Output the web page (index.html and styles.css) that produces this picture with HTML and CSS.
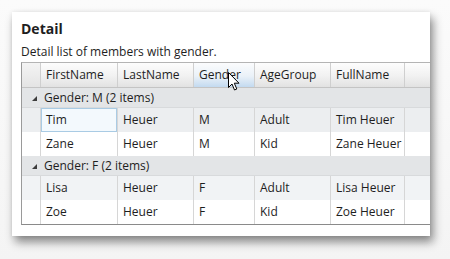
FILE: index.html
```html
<!DOCTYPE html>
<html lang="en">
<head>
    <meta charset="UTF-8">
    <title>Detail</title>
    <link rel="stylesheet" href="styles.css">
</head>
<body>
    <div class="window">
        <h1>Detail</h1>
        <p class="subtitle">Detail list of members with gender.</p>

        <div class="grid">
            <div class="row header">
                <div class="cell rowhead"></div>
                <div class="cell">FirstName</div>
                <div class="cell">LastName</div>
                <div class="cell hover">Gender</div>
                <div class="cell">AgeGroup</div>
                <div class="cell">FullName</div>
                <div class="cell filler"></div>
            </div>

            <div class="group"><span class="toggle"></span>Gender: M (2 items)</div>
            <div class="row selected">
                <div class="cell rowhead"></div>
                <div class="cell focus">Tim</div>
                <div class="cell">Heuer</div>
                <div class="cell">M</div>
                <div class="cell">Adult</div>
                <div class="cell">Tim Heuer</div>
                <div class="cell filler"></div>
            </div>
            <div class="row">
                <div class="cell rowhead"></div>
                <div class="cell">Zane</div>
                <div class="cell">Heuer</div>
                <div class="cell">M</div>
                <div class="cell">Kid</div>
                <div class="cell">Zane Heuer</div>
                <div class="cell filler"></div>
            </div>

            <div class="group"><span class="toggle"></span>Gender: F (2 items)</div>
            <div class="row alt">
                <div class="cell rowhead"></div>
                <div class="cell">Lisa</div>
                <div class="cell">Heuer</div>
                <div class="cell">F</div>
                <div class="cell">Adult</div>
                <div class="cell">Lisa Heuer</div>
                <div class="cell filler"></div>
            </div>
            <div class="row">
                <div class="cell rowhead"></div>
                <div class="cell">Zoe</div>
                <div class="cell">Heuer</div>
                <div class="cell">F</div>
                <div class="cell">Kid</div>
                <div class="cell">Zoe Heuer</div>
                <div class="cell filler"></div>
            </div>

            <!-- mouse pointer over the Gender column header -->
            <svg class="cursor" width="12" height="19" viewBox="0 0 12 19">
                <path d="M0.5 0.5 L0.5 15.5 L4 12 L6.5 18 L8.8 17 L6.3 11.2 L11 11.2 Z" fill="#fff" stroke="#000" stroke-width="1"/>
            </svg>
        </div>
    </div>
</body>
</html>
```

FILE: styles.css
```css
body {
    margin: 0;
    background: linear-gradient(#fbfbfb, #f4f4f4);
    font-family: 'Open Sans', 'Noto Sans', sans-serif;
    color: #1e1e1e;
    height: 259px;
    overflow: hidden;
}
.window {
    margin: 12px 0 0 12px;
    width: 418px;
    height: 224px;
    padding: 8px 0 0 9px;
    box-sizing: border-box;
    background-color: white;
    box-shadow: 3px 6px 9px rgba(0,0,0,0.45), 0 0 4px rgba(0,0,0,0.08);
    overflow: hidden;
}
h1 {
    margin: 0;
    font-size: 14px;
    font-weight: bold;
    line-height: 18px;
}
.subtitle {
    margin: 6px 0 0 0;
    font-size: 12px;
    line-height: 16px;
}
.grid {
    position: relative;
    margin-top: 2px;
    width: 420px;
    border-top: 1px solid #b4b4b4;
    border-left: 1px solid #9a9a9a;
    border-bottom: 1px solid #8a8a8a;
    font-size: 12px;
}
.row {
    display: grid;
    grid-template-columns: 19px 77px 76px 61px 76px 74px 1fr;
    height: 24px;
}
.cell {
    padding-left: 5px;
    line-height: 24px;
    border-right: 1px solid #d6d6d6;
    white-space: nowrap;
    overflow: hidden;
}
.rowhead {
    padding: 0;
}
.filler {
    border-right: none;
}
.header {
    height: 24px;
    background: linear-gradient(#fdfdfd, #f1f1f1 55%, #e2e2e2);
    border-bottom: 1px solid #c4c4c4;
}
.header .cell {
    line-height: 24px;
    border-right-color: #cfcfcf;
}
.header .rowhead {
    background: linear-gradient(#f4f4f4, #e4e4e4);
}
.header .hover {
    background: linear-gradient(#fbfcfd, #eaf1f8 55%, #c3daf0);
}
.group {
    height: 19px;
    line-height: 19px;
    background-color: #e3e5e7;
    padding-left: 10px;
    border-bottom: 1px solid #d8dadc;
}
.toggle {
    display: inline-block;
    width: 0;
    height: 0;
    border-left: 5px solid transparent;
    border-bottom: 5px solid #3c3c3c;
    margin-right: 7px;
    vertical-align: 1px;
}
.selected {
    background-color: #eceef0;
}
.alt {
    background-color: #f1f3f5;
}
.focus {
    background-color: #f3f9fd;
    box-shadow: inset 0 0 0 1px #a9cbe4;
}
.cursor {
    position: absolute;
    left: 206px;
    top: 9px;
}
```
